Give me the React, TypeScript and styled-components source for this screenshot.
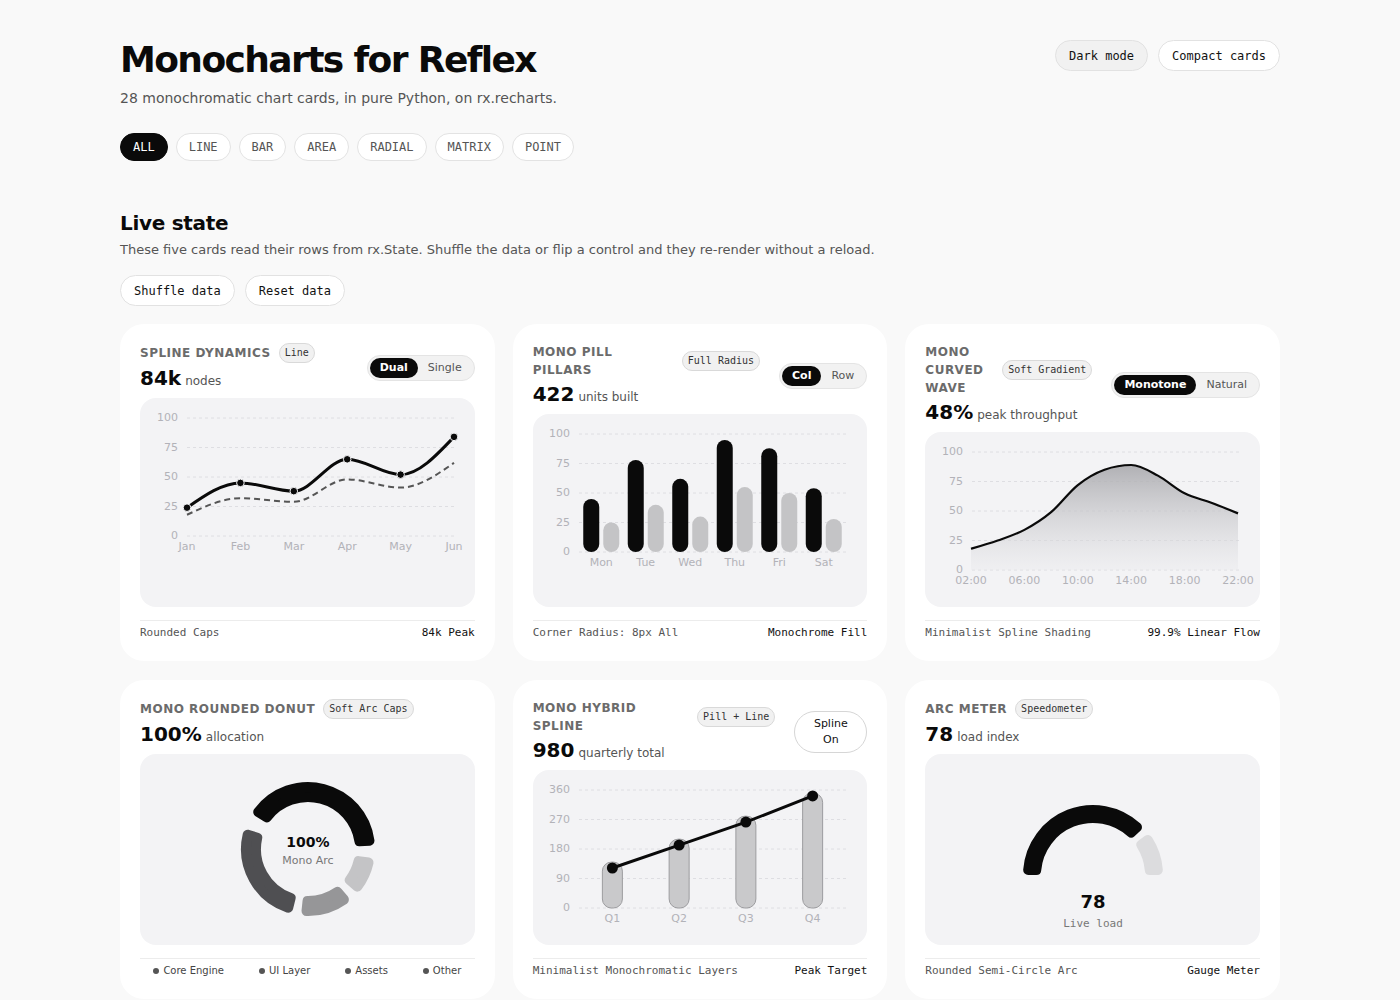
import React from 'react';
import styled, { createGlobalStyle } from 'styled-components';

const MONO = `"DejaVu Sans Mono", "Liberation Mono", monospace`;
const SANS = `"DejaVu Sans", "Liberation Sans", sans-serif`;

const GlobalStyle = createGlobalStyle`
  body {
    margin: 0;
    background: #f9f9f9;
    font-family: ${SANS};
    color: #0a0a0a;
  }
`;

const Page = styled.div`
  width: 1160px;
  margin: 0 auto;
  padding: 38px 0 40px;
`;

const TopBar = styled.header`
  display: flex;
  justify-content: space-between;
  align-items: flex-start;
`;

const Title = styled.h1`
  margin: 0;
  font-size: 36px;
  line-height: 44px;
  font-weight: 700;
  letter-spacing: -1.6px;
`;

const Subtitle = styled.p`
  margin: 6px 0 0;
  font-size: 14px;
  line-height: 20px;
  color: #555;
`;

const TopActions = styled.div`
  display: flex;
  gap: 10px;
  padding-top: 2px;
`;

const PillButton = styled.button<{ $muted?: boolean }>`
  height: 31px;
  padding: 0 13px;
  border: 1px solid #e2e2e2;
  border-radius: 999px;
  background: ${({ $muted }) => ($muted ? '#f1f1f1' : '#fff')};
  font-family: ${MONO};
  font-size: 12px;
  color: #111;
`;

const ChipRow = styled.div`
  display: flex;
  gap: 8px;
  margin-top: 25px;
`;

const Chip = styled.button<{ $active?: boolean }>`
  height: 28px;
  padding: 0 12px;
  border: 1px solid ${({ $active }) => ($active ? '#0a0a0a' : '#e3e3e3')};
  border-radius: 999px;
  background: ${({ $active }) => ($active ? '#0a0a0a' : '#fff')};
  color: ${({ $active }) => ($active ? '#fff' : '#555')};
  font-family: ${MONO};
  font-size: 12px;
`;

const SectionTitle = styled.h2`
  margin: 49px 0 0;
  font-size: 20px;
  line-height: 26px;
  font-weight: 700;
  letter-spacing: -0.3px;
`;

const SectionText = styled.p`
  margin: 5px 0 0;
  font-size: 13px;
  line-height: 18px;
  color: #555;
`;

const ActionRow = styled.div`
  display: flex;
  gap: 10px;
  margin-top: 16px;
`;

const Grid = styled.section`
  display: grid;
  grid-template-columns: repeat(3, 1fr);
  gap: 19px 18px;
  margin-top: 18px;
`;

const CardShell = styled.article`
  display: flex;
  flex-direction: column;
  background: #fff;
  border-radius: 24px;
  padding: 19px 20px 20px;
`;

const CardHeader = styled.div`
  display: flex;
  align-items: center;
  gap: 19px;
`;

const HeaderMain = styled.div`
  flex: 1;
  min-width: 0;
  display: flex;
  flex-direction: column;
`;

const TitleRow = styled.div`
  display: flex;
  align-items: center;
  gap: 8px;
`;

const CardTitle = styled.div`
  font-size: 12px;
  line-height: 18px;
  font-weight: 700;
  letter-spacing: 0.5px;
  text-transform: uppercase;
  color: #6b6b6b;
`;

const Badge = styled.span`
  flex: none;
  padding: 0 5px;
  border: 1px solid #d9d9d9;
  border-radius: 999px;
  background: #f1f1f1;
  font-family: ${MONO};
  font-size: 10px;
  line-height: 18px;
  color: #333;
  white-space: nowrap;
`;

const ValueLine = styled.div`
  font-size: 20px;
  line-height: 30px;
  white-space: nowrap;
`;

const BigNumber = styled.span`
  font-weight: 700;
`;

const Unit = styled.span`
  margin-left: 4px;
  font-size: 12px;
  line-height: 12px;
  color: #555;
`;

const Segmented = styled.div`
  flex: none;
  display: inline-flex;
  padding: 2px;
  border: 1px solid #e4e4e4;
  border-radius: 999px;
  background: #f2f2f2;
`;

const SegItem = styled.span<{ $active?: boolean }>`
  padding: 3px 10px;
  border-radius: 999px;
  font-size: 11px;
  line-height: 14px;
  font-weight: ${({ $active }) => ($active ? 700 : 400)};
  background: ${({ $active }) => ($active ? '#0a0a0a' : 'transparent')};
  color: ${({ $active }) => ($active ? '#fff' : '#555')};
`;

const SplineToggle = styled.button`
  flex: none;
  width: 73px;
  padding: 4px 18px;
  border: 1px solid #d6d6d6;
  border-radius: 22px;
  background: #fff;
  font-family: ${SANS};
  font-size: 11px;
  line-height: 16px;
  color: #111;
  text-align: center;
`;

const ChartBox = styled.div<{ $center?: boolean }>`
  flex: 1;
  display: flex;
  flex-direction: column;
  justify-content: ${({ $center }) => ($center ? 'center' : 'flex-start')};
  align-items: center;
  margin-top: 5px;
  padding: 10px;
  border-radius: 16px;
  background: #f3f3f5;
`;

const Footer = styled.div`
  display: flex;
  justify-content: space-between;
  margin-top: 13px;
  padding-top: 4px;
  border-top: 1px solid #ececec;
  font-family: ${MONO};
  font-size: 11px;
  line-height: 16px;
`;

const FootNote = styled.span<{ $strong?: boolean }>`
  color: ${({ $strong }) => ($strong ? '#111' : '#555')};
`;

const Legend = styled.div`
  display: flex;
  justify-content: center;
  gap: 35px;
  margin-top: 13px;
  padding-top: 4px;
  border-top: 1px solid #ececec;
  font-size: 10px;
  line-height: 16px;
  color: #444;
`;

const LegendItem = styled.span`
  display: inline-flex;
  align-items: center;
  gap: 4px;
`;

const Dot = styled.i`
  width: 6px;
  height: 6px;
  border-radius: 50%;
  background: #555;
`;

const ChartSvg = styled.svg`
  overflow: visible;
`;

/* ---------- chart helpers ---------- */

type Pt = [number, number];
const f = (n: number) => n.toFixed(2);

const monotone = (pts: Pt[]) => {
  const n = pts.length;
  if (n < 3) return 'M' + pts.map((p) => p.map(f).join(',')).join('L');
  const s = (i: number) => (pts[i + 1][1] - pts[i][1]) / (pts[i + 1][0] - pts[i][0]);
  const t: number[] = new Array(n).fill(0);
  for (let i = 1; i < n - 1; i++) {
    const h0 = pts[i][0] - pts[i - 1][0];
    const h1 = pts[i + 1][0] - pts[i][0];
    const s0 = s(i - 1);
    const s1 = s(i);
    const p = (s0 * h1 + s1 * h0) / (h0 + h1);
    t[i] = (Math.sign(s0) + Math.sign(s1)) * Math.min(Math.abs(s0), Math.abs(s1), 0.5 * Math.abs(p)) || 0;
  }
  t[0] = (3 * s(0) - t[1]) / 2;
  t[n - 1] = (3 * s(n - 2) - t[n - 2]) / 2;
  let d = `M${f(pts[0][0])},${f(pts[0][1])}`;
  for (let i = 0; i < n - 1; i++) {
    const [x0, y0] = pts[i];
    const [x1, y1] = pts[i + 1];
    const dx = (x1 - x0) / 3;
    d += `C${f(x0 + dx)},${f(y0 + dx * t[i])} ${f(x1 - dx)},${f(y1 - dx * t[i + 1])} ${f(x1)},${f(y1)}`;
  }
  return d;
};

const polar = (cx: number, cy: number, r: number, deg: number): Pt => {
  const a = (deg * Math.PI) / 180;
  return [cx + r * Math.cos(a), cy - r * Math.sin(a)];
};

// annular sector from `from` to `to` degrees (clockwise), shrunk by c so a round stroke gives soft corners
const sector = (cx: number, cy: number, rIn: number, rOut: number, from: number, to: number, c: number) => {
  const ro = rOut - c;
  const ri = rIn + c;
  const dOut = ((c / ro) * 180) / Math.PI;
  const dIn = ((c / ri) * 180) / Math.PI;
  const [x0, y0] = polar(cx, cy, ro, from - dOut);
  const [x1, y1] = polar(cx, cy, ro, to + dOut);
  const [x2, y2] = polar(cx, cy, ri, to + dIn);
  const [x3, y3] = polar(cx, cy, ri, from - dIn);
  const large = from - to > 180 ? 1 : 0;
  return `M${f(x0)},${f(y0)} A${ro},${ro} 0 ${large} 1 ${f(x1)},${f(y1)} L${f(x2)},${f(y2)} A${ri},${ri} 0 ${large} 0 ${f(x3)},${f(y3)} Z`;
};

const W = 313;
const H = 155;
const X0 = 36;
const X1 = 303;
const Y_TOP = 10;
const Y_ZERO = 128;

const Axis: React.FC<{ ticks: string[]; labels: string[]; xs: number[] }> = ({ ticks, labels, xs }) => (
  <g fontFamily={SANS} fontSize="11" fill="#b2b2b8">
    {ticks.map((t, i) => {
      const y = Y_ZERO - ((Y_ZERO - Y_TOP) * i) / (ticks.length - 1);
      return (
        <g key={t}>
          <line x1={X0} x2={X1} y1={y} y2={y} stroke="#dedee2" strokeDasharray="3 3" />
          <text x={27} y={y} textAnchor="end" dominantBaseline="middle">
            {t}
          </text>
        </g>
      );
    })}
    {labels.map((l, i) => (
      <text key={l} x={xs[i]} y={139} textAnchor="middle" dominantBaseline="middle">
        {l}
      </text>
    ))}
  </g>
);

const pct = ['0', '25', '50', '75', '100'];
const yOf = (v: number, max = 100) => Y_ZERO - (v / max) * (Y_ZERO - Y_TOP);

const SplineChart = () => {
  const months = ['Jan', 'Feb', 'Mar', 'Apr', 'May', 'Jun'];
  const xs = months.map((_, i) => X0 + (i * (X1 - X0)) / 5);
  const main = [24, 45, 38, 65, 52, 84];
  const ghost = [18, 32, 29, 48, 41, 62];
  const mainPts = main.map((v, i) => [xs[i], yOf(v)] as Pt);
  return (
    <ChartSvg width={W} height={H}>
      <Axis ticks={pct} labels={months} xs={xs} />
      <path d={monotone(ghost.map((v, i) => [xs[i], yOf(v)] as Pt))} fill="none" stroke="#555" strokeWidth="2" strokeDasharray="6 4" />
      <path d={monotone(mainPts)} fill="none" stroke="#0a0a0a" strokeWidth="3" strokeLinecap="round" />
      {mainPts.map(([x, y]) => (
        <circle key={x} cx={x} cy={y} r="3.8" fill="#0a0a0a" stroke="#f3f3f5" strokeWidth="1" />
      ))}
    </ChartSvg>
  );
};

const PillarChart = () => {
  const days = ['Mon', 'Tue', 'Wed', 'Thu', 'Fri', 'Sat'];
  const band = (X1 - X0) / days.length;
  const xs = days.map((_, i) => X0 + band / 2 + i * band);
  const dark = [45, 78, 62, 95, 88, 54];
  const light = [25, 40, 30, 55, 50, 28];
  return (
    <ChartSvg width={W} height={H}>
      <Axis ticks={pct} labels={days} xs={xs} />
      {xs.map((c, i) => (
        <g key={c}>
          <rect x={c - 18} y={yOf(dark[i])} width="16" height={Y_ZERO - yOf(dark[i])} rx="8" fill="#0a0a0a" />
          <rect x={c + 2} y={yOf(light[i])} width="16" height={Y_ZERO - yOf(light[i])} rx="8" fill="#c4c4c6" />
        </g>
      ))}
    </ChartSvg>
  );
};

const WaveChart = () => {
  const hours = ['02:00', '06:00', '10:00', '14:00', '18:00', '22:00'];
  const vals = [18, 25, 34, 49, 72, 85, 89, 80, 65, 57, 48];
  const step = (X1 - X0) / 10;
  const pts = vals.map((v, i) => [X0 - 1 + i * step, yOf(v)] as Pt);
  const line = monotone(pts);
  const xs = hours.map((_, i) => X0 - 1 + i * 2 * step);
  return (
    <ChartSvg width={W} height={H}>
      <defs>
        <linearGradient id="waveFill" x1="0" y1={Y_TOP + 10} x2="0" y2={Y_ZERO} gradientUnits="userSpaceOnUse">
          <stop offset="0%" stopColor="#a6a6aa" stopOpacity="0.9" />
          <stop offset="100%" stopColor="#e9e9ec" stopOpacity="0.4" />
        </linearGradient>
      </defs>
      <Axis ticks={pct} labels={hours} xs={xs} />
      <path d={`${line}L${f(pts[pts.length - 1][0])},${Y_ZERO}L${f(pts[0][0])},${Y_ZERO}Z`} fill="url(#waveFill)" />
      <path d={line} fill="none" stroke="#0a0a0a" strokeWidth="2.2" />
    </ChartSvg>
  );
};

const HybridChart = () => {
  const qs = ['Q1', 'Q2', 'Q3', 'Q4'];
  const band = (X1 - X0) / qs.length;
  const xs = qs.map((_, i) => X0 + band / 2 + i * band);
  const bars = [140, 210, 280, 350];
  const line = [122, 192, 262, 342];
  const pts = line.map((v, i) => [xs[i], yOf(v, 360)] as Pt);
  return (
    <ChartSvg width={W} height={H}>
      <Axis ticks={['0', '90', '180', '270', '360']} labels={qs} xs={xs} />
      {xs.map((c, i) => (
        <rect
          key={c}
          x={c - 10}
          y={yOf(bars[i], 360)}
          width="20"
          height={Y_ZERO - yOf(bars[i], 360)}
          rx="9"
          fill="#c9c9cb"
          stroke="#9c9c9f"
          strokeWidth="1"
        />
      ))}
      <path d={'M' + pts.map((p) => p.map(f).join(',')).join('L')} fill="none" stroke="#0a0a0a" strokeWidth="3" />
      {pts.map(([x, y]) => (
        <circle key={x} cx={x} cy={y} r="5.5" fill="#0a0a0a" />
      ))}
    </ChartSvg>
  );
};

const DonutChart = () => {
  const cx = 157;
  const cy = 77;
  const parts: [number, number, string][] = [
    [148, 3, '#0a0a0a'],
    [-8, -42, '#c4c4c6'],
    [-50, -96, '#969698'],
    [-104, -198, '#4f4f52'],
  ];
  return (
    <ChartSvg width={W} height={H}>
      {parts.map(([a, b, c]) => (
        <path key={c} d={sector(cx, cy, 47, 67, a, b, 5)} fill={c} stroke={c} strokeWidth="10" strokeLinejoin="round" />
      ))}
      <text x={cx} y={cy - 6} textAnchor="middle" dominantBaseline="middle" fontFamily={SANS} fontWeight="700" fontSize="14" fill="#0a0a0a">
        100%
      </text>
      <text x={cx} y={cy + 12} textAnchor="middle" dominantBaseline="middle" fontFamily={SANS} fontSize="11" fill="#777">
        Mono Arc
      </text>
    </ChartSvg>
  );
};

const GaugeChart = () => {
  const cx = 157;
  const cy = 110;
  return (
    <ChartSvg width={W} height={170}>
      <path d={sector(cx, cy, 52, 70, 180, 43, 5)} fill="#0a0a0a" stroke="#0a0a0a" strokeWidth="10" strokeLinejoin="round" />
      <path d={sector(cx, cy, 52, 70, 37, 0, 5)} fill="#dcdcde" stroke="#dcdcde" strokeWidth="10" strokeLinejoin="round" />
      <text x={cx} y={138} textAnchor="middle" dominantBaseline="middle" fontFamily={SANS} fontWeight="700" fontSize="18" fill="#0a0a0a">
        78
      </text>
      <text x={cx} y={159} textAnchor="middle" dominantBaseline="middle" fontFamily={MONO} fontSize="11" fill="#777">
        Live load
      </text>
    </ChartSvg>
  );
};

/* ---------- cards ---------- */

interface CardProps {
  title: string;
  badge: string;
  value: string;
  unit: string;
  control?: React.ReactNode;
  footer: React.ReactNode;
  center?: boolean;
  children: React.ReactNode;
}

const Card: React.FC<CardProps> = ({ title, badge, value, unit, control, footer, center, children }) => (
  <CardShell>
    <CardHeader>
      <HeaderMain>
        <TitleRow>
          <CardTitle>{title}</CardTitle>
          <Badge>{badge}</Badge>
        </TitleRow>
        <ValueLine>
          <BigNumber>{value}</BigNumber>
          <Unit>{unit}</Unit>
        </ValueLine>
      </HeaderMain>
      {control}
    </CardHeader>
    <ChartBox $center={center}>{children}</ChartBox>
    {footer}
  </CardShell>
);

const Toggle: React.FC<{ options: string[]; active: number }> = ({ options, active }) => (
  <Segmented>
    {options.map((o, i) => (
      <SegItem key={o} $active={i === active}>
        {o}
      </SegItem>
    ))}
  </Segmented>
);

const Foot: React.FC<{ left: string; right: string }> = ({ left, right }) => (
  <Footer>
    <FootNote>{left}</FootNote>
    <FootNote $strong>{right}</FootNote>
  </Footer>
);

const filters = ['ALL', 'LINE', 'BAR', 'AREA', 'RADIAL', 'MATRIX', 'POINT'];

export default function App() {
  return (
    <>
      <GlobalStyle />
      <Page>
        <TopBar>
          <div>
            <Title>Monocharts for Reflex</Title>
            <Subtitle>28 monochromatic chart cards, in pure Python, on rx.recharts.</Subtitle>
          </div>
          <TopActions>
            <PillButton $muted>Dark mode</PillButton>
            <PillButton>Compact cards</PillButton>
          </TopActions>
        </TopBar>

        <ChipRow>
          {filters.map((f, i) => (
            <Chip key={f} $active={i === 0}>
              {f}
            </Chip>
          ))}
        </ChipRow>

        <SectionTitle>Live state</SectionTitle>
        <SectionText>
          These five cards read their rows from rx.State. Shuffle the data or flip a control and they re-render without a reload.
        </SectionText>
        <ActionRow>
          <PillButton>Shuffle data</PillButton>
          <PillButton>Reset data</PillButton>
        </ActionRow>

        <Grid>
          <Card
            title="Spline Dynamics"
            badge="Line"
            value="84k"
            unit="nodes"
            control={<Toggle options={['Dual', 'Single']} active={0} />}
            footer={<Foot left="Rounded Caps" right="84k Peak" />}
          >
            <SplineChart />
          </Card>
          <Card
            title="Mono Pill Pillars"
            badge="Full Radius"
            value="422"
            unit="units built"
            control={<Toggle options={['Col', 'Row']} active={0} />}
            footer={<Foot left="Corner Radius: 8px All" right="Monochrome Fill" />}
          >
            <PillarChart />
          </Card>
          <Card
            title="Mono Curved Wave"
            badge="Soft Gradient"
            value="48%"
            unit="peak throughput"
            control={<Toggle options={['Monotone', 'Natural']} active={0} />}
            footer={<Foot left="Minimalist Spline Shading" right="99.9% Linear Flow" />}
          >
            <WaveChart />
          </Card>
          <Card
            title="Mono Rounded Donut"
            badge="Soft Arc Caps"
            value="100%"
            unit="allocation"
            center
            footer={
              <Legend>
                {['Core Engine', 'UI Layer', 'Assets', 'Other'].map((l) => (
                  <LegendItem key={l}>
                    <Dot />
                    {l}
                  </LegendItem>
                ))}
              </Legend>
            }
          >
            <DonutChart />
          </Card>
          <Card
            title="Mono Hybrid Spline"
            badge="Pill + Line"
            value="980"
            unit="quarterly total"
            control={<SplineToggle>Spline On</SplineToggle>}
            footer={<Foot left="Minimalist Monochromatic Layers" right="Peak Target" />}
          >
            <HybridChart />
          </Card>
          <Card
            title="Arc Meter"
            badge="Speedometer"
            value="78"
            unit="load index"
            center
            footer={<Foot left="Rounded Semi-Circle Arc" right="Gauge Meter" />}
          >
            <GaugeChart />
          </Card>
        </Grid>
      </Page>
    </>
  );
}
